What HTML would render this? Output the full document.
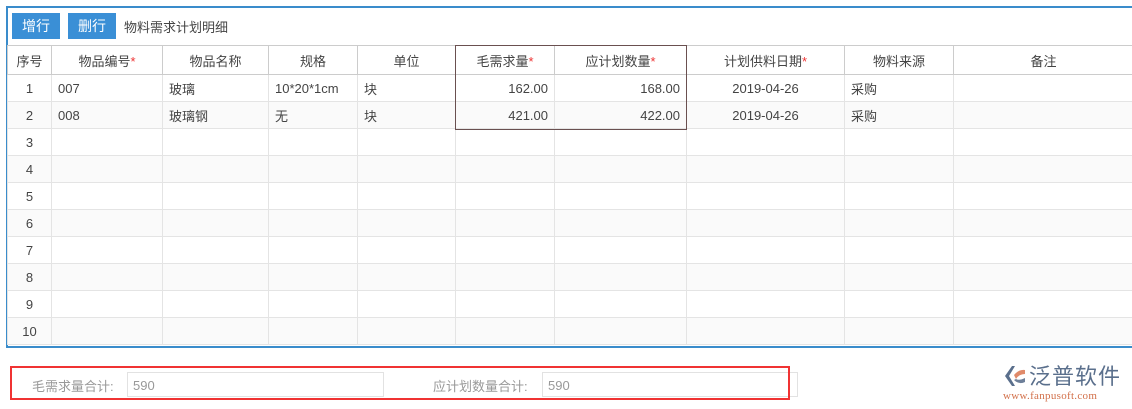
<!DOCTYPE html>
<html><head><meta charset="utf-8"><style>
body{margin:0;width:1132px;height:409px;background:#fff;position:relative;overflow:hidden;font-family:"Liberation Sans","Noto Sans CJK SC",sans-serif;font-size:13px;color:#444}
.box{position:absolute;left:6px;top:6px;width:1132px;height:338px;border:2px solid #3a8ccb;border-right:none;box-sizing:content-box}
.btn{position:absolute;top:13px;height:26px;width:48px;background:#3a8fd6;color:#fff;font-size:14px;line-height:26px;text-align:center}
.a{position:absolute}
table{position:absolute;left:7px;top:45px;width:1126px;border-collapse:collapse;table-layout:fixed}
td{border:1px solid #e4e4e4;height:26px;padding:0 6px;font-size:13px;white-space:nowrap;overflow:hidden}
tr.h td{border-color:#ccc;text-align:center;height:28px}
tr:nth-child(odd):not(.h) td{background:#fafafa}
.c{text-align:center}.r{text-align:right}
.s{color:#e33}
.inp{position:absolute;top:372px;height:25px;border:1px solid #e2e2e2;color:#999;font-size:13px;line-height:25px;padding-left:5px;box-sizing:border-box}
.lbl{position:absolute;top:376px;color:#999;font-size:13px}
</style></head><body>
<div class="box"></div>
<div class="btn" style="left:12px">增行</div>
<div class="btn" style="left:68px">删行</div>
<div class="a" style="left:124px;top:17px;font-size:13px">物料需求计划明细</div>
<table>
<colgroup><col style="width:44px"><col style="width:111px"><col style="width:106px"><col style="width:89px"><col style="width:98px"><col style="width:99px"><col style="width:132px"><col style="width:158px"><col style="width:109px"><col style="width:180px"></colgroup>
<tr class="h"><td>序号</td><td>物品编号<span class="s">*</span></td><td>物品名称</td><td>规格</td><td>单位</td><td>毛需求量<span class="s">*</span></td><td>应计划数量<span class="s">*</span></td><td>计划供料日期<span class="s">*</span></td><td>物料来源</td><td>备注</td></tr>
<tr><td class="c">1</td><td>007</td><td>玻璃</td><td>10*20*1cm</td><td>块</td><td class="r">162.00</td><td class="r">168.00</td><td class="c">2019-04-26</td><td>采购</td><td></td></tr>
<tr><td class="c">2</td><td>008</td><td>玻璃钢</td><td>无</td><td>块</td><td class="r">421.00</td><td class="r">422.00</td><td class="c">2019-04-26</td><td>采购</td><td></td></tr>
<tr><td class="c">3</td><td></td><td></td><td></td><td></td><td></td><td></td><td></td><td></td><td></td></tr>
<tr><td class="c">4</td><td></td><td></td><td></td><td></td><td></td><td></td><td></td><td></td><td></td></tr>
<tr><td class="c">5</td><td></td><td></td><td></td><td></td><td></td><td></td><td></td><td></td><td></td></tr>
<tr><td class="c">6</td><td></td><td></td><td></td><td></td><td></td><td></td><td></td><td></td><td></td></tr>
<tr><td class="c">7</td><td></td><td></td><td></td><td></td><td></td><td></td><td></td><td></td><td></td></tr>
<tr><td class="c">8</td><td></td><td></td><td></td><td></td><td></td><td></td><td></td><td></td><td></td></tr>
<tr><td class="c">9</td><td></td><td></td><td></td><td></td><td></td><td></td><td></td><td></td><td></td></tr>
<tr><td class="c">10</td><td></td><td></td><td></td><td></td><td></td><td></td><td></td><td></td><td></td></tr>
</table>
<div class="a" style="left:455px;top:45px;width:230px;height:83px;border:1px solid #6a5050"></div>
<div class="lbl" style="left:32px">毛需求量合计:</div>
<div class="inp" style="left:127px;width:257px">590</div>
<div class="lbl" style="left:433px">应计划数量合计:</div>
<div class="inp" style="left:542px;width:256px">590</div>
<div class="a" style="left:10px;top:366px;width:780px;height:34px;border:2px solid #f03333;box-sizing:border-box"></div>
<svg class="a" style="left:1004px;top:365px" width="22" height="22" viewBox="0 0 22 22"><path d="M8 1 L1 11 L8 21 L11 21 L5 11 L11 1Z" fill="#5a6f8c"/><path d="M10 10 Q15 4 21 5 L21 9 Q15 9 12 14Z" fill="#e08a6a"/><path d="M10 15 Q15 20 21 17 L21 13 Q15 16 12 14Z" fill="#6d7f99"/></svg>
<div class="a" style="left:1029px;top:361px;font-size:22px;color:#5a6f8c;letter-spacing:1px;font-family:'Noto Sans CJK SC',sans-serif;line-height:28px">泛普软件</div>
<div class="a" style="left:1003px;top:390px;font-size:11px;color:#d2704a;font-family:'Liberation Serif',serif;letter-spacing:0.3px">www.fanpusoft.com</div>
</body></html>
